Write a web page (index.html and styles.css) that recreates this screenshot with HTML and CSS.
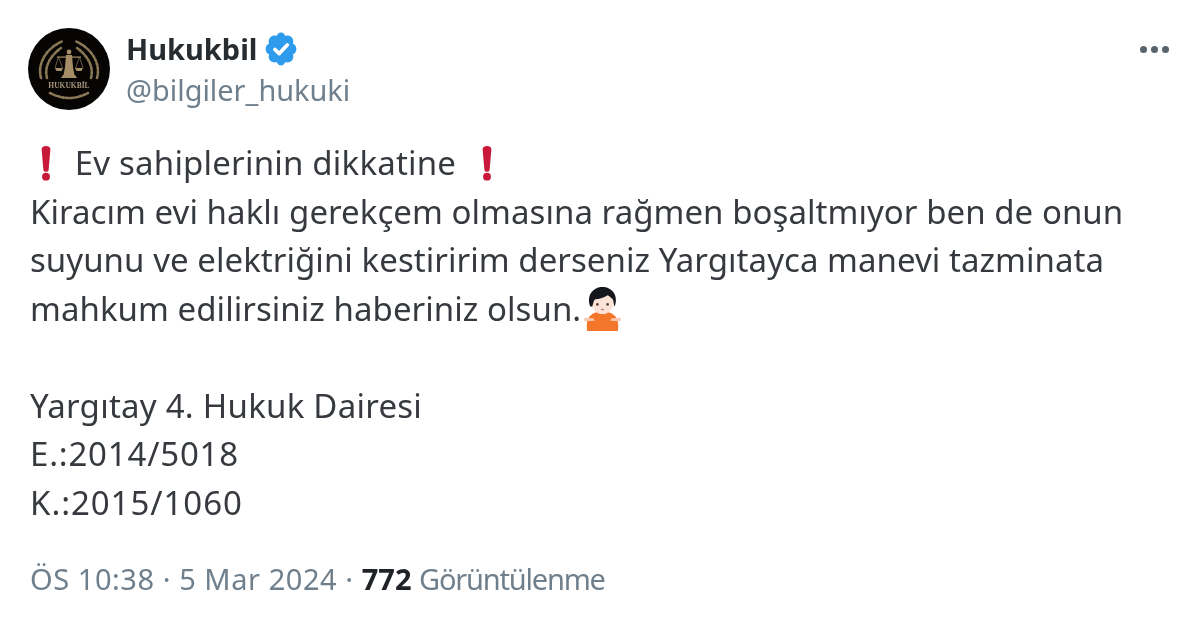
FILE: index.html
```html
<!DOCTYPE html>
<html lang="tr">
<head>
<meta charset="utf-8">
<title>Hukukbil</title>
<link rel="stylesheet" href="styles.css">
</head>
<body>
<main class="tweet">
  <header class="head">
    <svg class="avatar" viewBox="0 0 82 82" aria-hidden="true">
      <circle cx="41" cy="41" r="41" fill="#060504"/>
      <g fill="none" stroke="#8a7755" stroke-width="2.600" stroke-dasharray="2.500 1.800" stroke-linecap="round">
        <path d="M13 50C9 36 18 20 35 13"/>
        <path d="M69 50C73 36 64 20 47 13"/>
        <path d="M19 50C16 39 22 28 33 20"/>
        <path d="M63 50C66 39 60 28 49 20"/>
        <path d="M22 65Q41 75 60 65"/>
      </g>
      <g fill="#a58e66">
        <circle cx="41" cy="24" r="2.400"/>
        <path d="M38 27h6l1 12 1.500 8h-11L37 39z"/>
        <rect x="29" y="28.500" width="24" height="1.200"/>
        <path d="M27 40h8l-1.500 3h-5zM47 40h8l-1.500 3h-5z"/>
        <path d="M35 47h12l2 3H33z"/>
      </g>
      <g stroke="#8e7a58" stroke-width=".7" fill="none">
        <path d="M30.500 29l-3.500 11M30.500 29l4 11M51.500 29l-4 11M51.500 29l3.500 11"/>
      </g>
      <text class="crest" x="41" y="60" text-anchor="middle">HUKUKBİL</text>
    </svg>
    <div class="who">
      <div class="name-row">
        <span class="name">Hukukbil</span>
        <svg class="badge" viewBox="0 0 22 22" aria-hidden="true">
          <path fill="#2f9bec" d="M20.400 11c0-1.400-.8-2.700-2.100-3.300.5-1.300.2-2.900-.8-3.900s-2.500-1.300-3.900-.8C13 1.700 12.400.9 11 .9S8.900 1.700 8.400 3c-1.300-.5-2.900-.2-3.900.8s-1.300 2.600-.8 3.900C2.400 8.300 1.600 9.600 1.600 11s.8 2.700 2.100 3.300c-.5 1.300-.2 2.900.8 3.900s2.600 1.300 3.900.8c.6 1.300 1.200 2.100 2.600 2.100s2-.8 2.600-2.100c1.300.5 2.900.2 3.900-.8s1.300-2.600.8-3.900c1.300-.6 2.100-1.900 2.100-3.300z"/>
          <path fill="none" stroke="#fff" stroke-width="2.300" stroke-linecap="round" stroke-linejoin="round" d="M7.300 11.300l2.600 2.500 4.900-5.300"/>
        </svg>
      </div>
      <div class="handle">@bilgiler_hukuki</div>
    </div>
    <div class="more" aria-hidden="true"><i></i><i></i><i></i></div>
  </header>
  <div class="body">
    <p class="wide-1"><svg class="bang" viewBox="0 0 16 40" aria-hidden="true"><path fill="#c8193a" d="M3 4a5 4 0 0 1 10 0l-2 23a3 2.500 0 0 1-6 0z"/><circle cx="8" cy="35" r="4.500" fill="#c8193a"/></svg> Ev sahiplerinin dikkatine <svg class="bang bang-end" viewBox="0 0 16 40" aria-hidden="true"><path fill="#c8193a" d="M3 4a5 4 0 0 1 10 0l-2 23a3 2.500 0 0 1-6 0z"/><circle cx="8" cy="35" r="4.500" fill="#c8193a"/></svg></p>
    <p>Kiracım evi haklı gerekçem olmasına rağmen boşaltmıyor ben de onun</p>
    <p>suyunu ve elektriğini kestiririm derseniz Yargıtayca manevi tazminata</p>
    <p>mahkum edilirsiniz haberiniz olsun.<svg class="shrug" viewBox="0 0 36 43" aria-hidden="true">
      <path fill="#f4762a" d="M3 43c-1-7 0-12 3-15 3-3 7-4 12-4s9 1 12 4c3 3 4 8 3 15z"/>
      <path fill="#f7c6ae" d="M0 30l9 .5 1.500 2.500-10 .5zM36 30l-9 .5-1.500 2.500 10 .5z"/>
      <ellipse cx="18" cy="15" rx="11" ry="11.500" fill="#fbe3d8"/>
      <path fill="#15171c" d="M6 19C2 8 9 0 18 0s16 8 12 19c-1-1-1-5-2-7-2-2-3-3-5-4-3 2-8 4-12 4-2 1-2 5-3 7z"/>
      <circle cx="13" cy="17" r="1.300" fill="#5b4038"/><circle cx="23" cy="17" r="1.300" fill="#5b4038"/>
      <path fill="none" stroke="#c9806f" stroke-width="1.200" d="M16.500 22h3"/>
    </svg></p>
    <p class="blank">&nbsp;</p>
    <p class="wide-2">Yargıtay 4. Hukuk Dairesi</p>
    <p class="wide-3">E.:2014/5018</p>
    <p class="wide-4">K.:2015/1060</p>
  </div>
  <footer class="meta"><span class="stamp">ÖS 10:38 · 5 Mar 2024 · </span><b>772</b> <span class="views">Görüntülenme</span></footer>
</main>
</body>
</html>
```

FILE: styles.css
```css
* { box-sizing: border-box; }
html, body { margin: 0; padding: 0; background: #fff; }
body { width: 1200px; height: 629px; overflow: hidden; font-family: "Noto Sans", "Open Sans", sans-serif; }
.tweet { padding: 28px 30px 0 28px; filter: blur(.4px); }
.head { display: flex; align-items: flex-start; }
.avatar { width: 82px; height: 82px; flex: none; display: block; }
.crest { font-family: "Liberation Serif", serif; font-size: 7.500px; font-weight: 700; fill: #a8977a; }
.who { margin-left: 16px; padding-top: 2px; flex: 1; }
.name-row { display: flex; align-items: center; height: 38px; }
.name { font-size: 29px; font-weight: 700; color: #272c30; line-height: 38px; }
.badge { width: 36px; height: 36px; margin-left: 5px; }
.handle { font-size: 28.900px; line-height: 42px; margin-top: 1px; color: #6f7f8c; }
.more { display: flex; gap: 4px; margin: 18px 1px 0 0; }
.more i { width: 7px; height: 7px; border-radius: 50%; background: #59636c; }
.body { margin: 28px 0 0 2px; color: #363a3e; font-size: 33px; line-height: 48.500px; letter-spacing: .05px; }
.body p { margin: 0; white-space: nowrap; }
.wide-1 { letter-spacing: .2px; }
.wide-2 { letter-spacing: .25px; }
.wide-3 { letter-spacing: .8px; }
.wide-4 { letter-spacing: .95px; }
.bang { width: 14px; height: 37px; vertical-align: -7px; margin: 0 13px 0 9px; }
.bang-end { margin: 0 0 0 15px; }
.shrug { width: 37px; height: 44px; vertical-align: -10px; margin-left: 3px; }
.meta { margin: 34px 0 0 2px; font-size: 29px; line-height: 36px; color: #6f7f8c; }
.meta b { color: #1f2327; }
.stamp { letter-spacing: .55px; }
.views { letter-spacing: -1.200px; }
```
